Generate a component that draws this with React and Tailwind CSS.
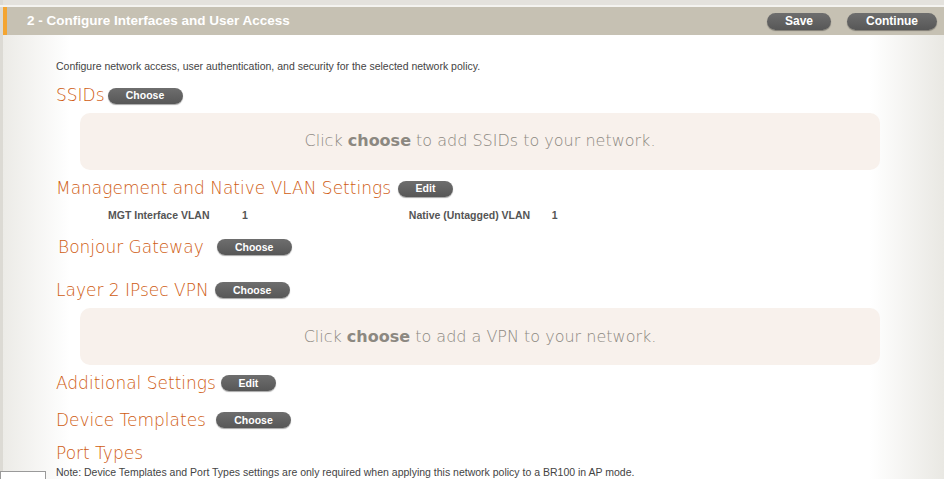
import React from 'react';

const heading = "font-['DejaVu_Sans',sans-serif] font-extralight text-[#cf5c12] text-[17px] leading-none whitespace-nowrap";

const PillButton = ({ children, className = "" }) => (
  <span
    className={`inline-flex items-center justify-center rounded-full bg-[linear-gradient(#6e6e6e,#575757)] shadow-[0_1px_1px_rgba(0,0,0,0.35)] text-white font-bold font-['Liberation_Sans',Arial,sans-serif] leading-none ${className}`}
  >
    {children}
  </span>
);

const Section = ({ title, button, btnW = "w-[75px]", gap = "ml-[11px]" }) => (
  <div className="flex items-center h-[18px]">
    <span className={heading}>{title}</span>
    {button && (
      <PillButton className={`${gap} ${btnW} h-[16px] text-[10.5px]`}>{button}</PillButton>
    )}
  </div>
);

const EmptyBox = ({ children }) => (
  <div className="ml-[24px] mr-[64px] h-[57px] rounded-[10px] bg-[#f8f1ec] flex items-center justify-center font-['DejaVu_Sans',sans-serif] font-extralight text-[16px] text-[#8c8881]">
    {children}
  </div>
);

export default function App() {
  return (
    <div className="w-[944px] h-[479px] overflow-hidden relative bg-white font-['Liberation_Sans',Arial,sans-serif]">
      <div className="h-[5px] bg-[#e4e2dd] border-l-[3px] border-[#dcdad4]" />
      <div className="h-[2px] bg-[#f4f3f0]" />
      <div className="flex">
        <div className="w-[3px] bg-[#dcdad4]" />
        <div className="flex-1 h-[28px] bg-[#c6c1b3] border-l-[4px] border-[#f4a531] flex items-center pl-[20px] pr-[7px]">
          <span className="text-white font-bold text-[13.5px]">2 - Configure Interfaces and User Access</span>
          <div className="ml-auto flex gap-[16px]">
            <PillButton className="w-[64px] h-[17px] text-[12px]">Save</PillButton>
            <PillButton className="w-[90px] h-[17px] text-[12px]">Continue</PillButton>
          </div>
        </div>
      </div>
      <div className="h-[444px] bg-[linear-gradient(to_right,#dcdad4_0px,#dcdad4_3px,#ecebe7_3px,#ffffff_70px,#ffffff_870px,#e9e8e3_944px)] pl-[56px] pt-[26px]">
        <p className="text-[10.5px] text-[#444] leading-none">
          Configure network access, user authentication, and security for the selected network policy.
        </p>
        <div className="mt-[15px]">
          <Section title="SSIDs" button="Choose" gap="ml-[3px]" />
        </div>
        <div className="mt-[8px]">
          <EmptyBox>
            <span>Click <b className="font-bold">choose</b> to add SSIDs to your network.</span>
          </EmptyBox>
        </div>
        <div className="mt-[10px]">
          <Section title="Management and Native VLAN Settings" button="Edit" btnW="w-[55px]" gap="ml-[7px]" />
        </div>
        <div className="mt-[12px] flex text-[10.5px] font-bold text-[#555] leading-none whitespace-nowrap">
          <span className="ml-[52px] w-[134px]">MGT Interface VLAN</span>
          <span>1</span>
          <span className="ml-[161px] w-[143px]">Native (Untagged) VLAN</span>
          <span>1</span>
        </div>
        <div className="mt-[18px] ml-[2px]">
          <Section title="Bonjour Gateway" button="Choose" gap="ml-[13px]" />
        </div>
        <div className="mt-[25px]">
          <Section title="Layer 2 IPsec VPN" button="Choose" gap="ml-[6px]" />
        </div>
        <div className="mt-[9px]">
          <EmptyBox>
            <span>Click <b className="font-bold">choose</b> to add a VPN to your network.</span>
          </EmptyBox>
        </div>
        <div className="mt-[9px]">
          <Section title="Additional Settings" button="Edit" btnW="w-[55px]" gap="ml-[5px]" />
        </div>
        <div className="mt-[19px]">
          <Section title="Device Templates" button="Choose" gap="ml-[10px]" />
        </div>
        <div className="mt-[15px]">
          <Section title="Port Types" />
        </div>
        <p className="mt-[5px] text-[10.5px] text-[#444] leading-none whitespace-nowrap">
          Note: Device Templates and Port Types settings are only required when applying this network policy to a BR100 in AP mode.
        </p>
      </div>
      <div className="absolute left-0 top-[471px] w-[46px] h-[12px] bg-white border border-[#9a9a9a]" />
    </div>
  );
}
